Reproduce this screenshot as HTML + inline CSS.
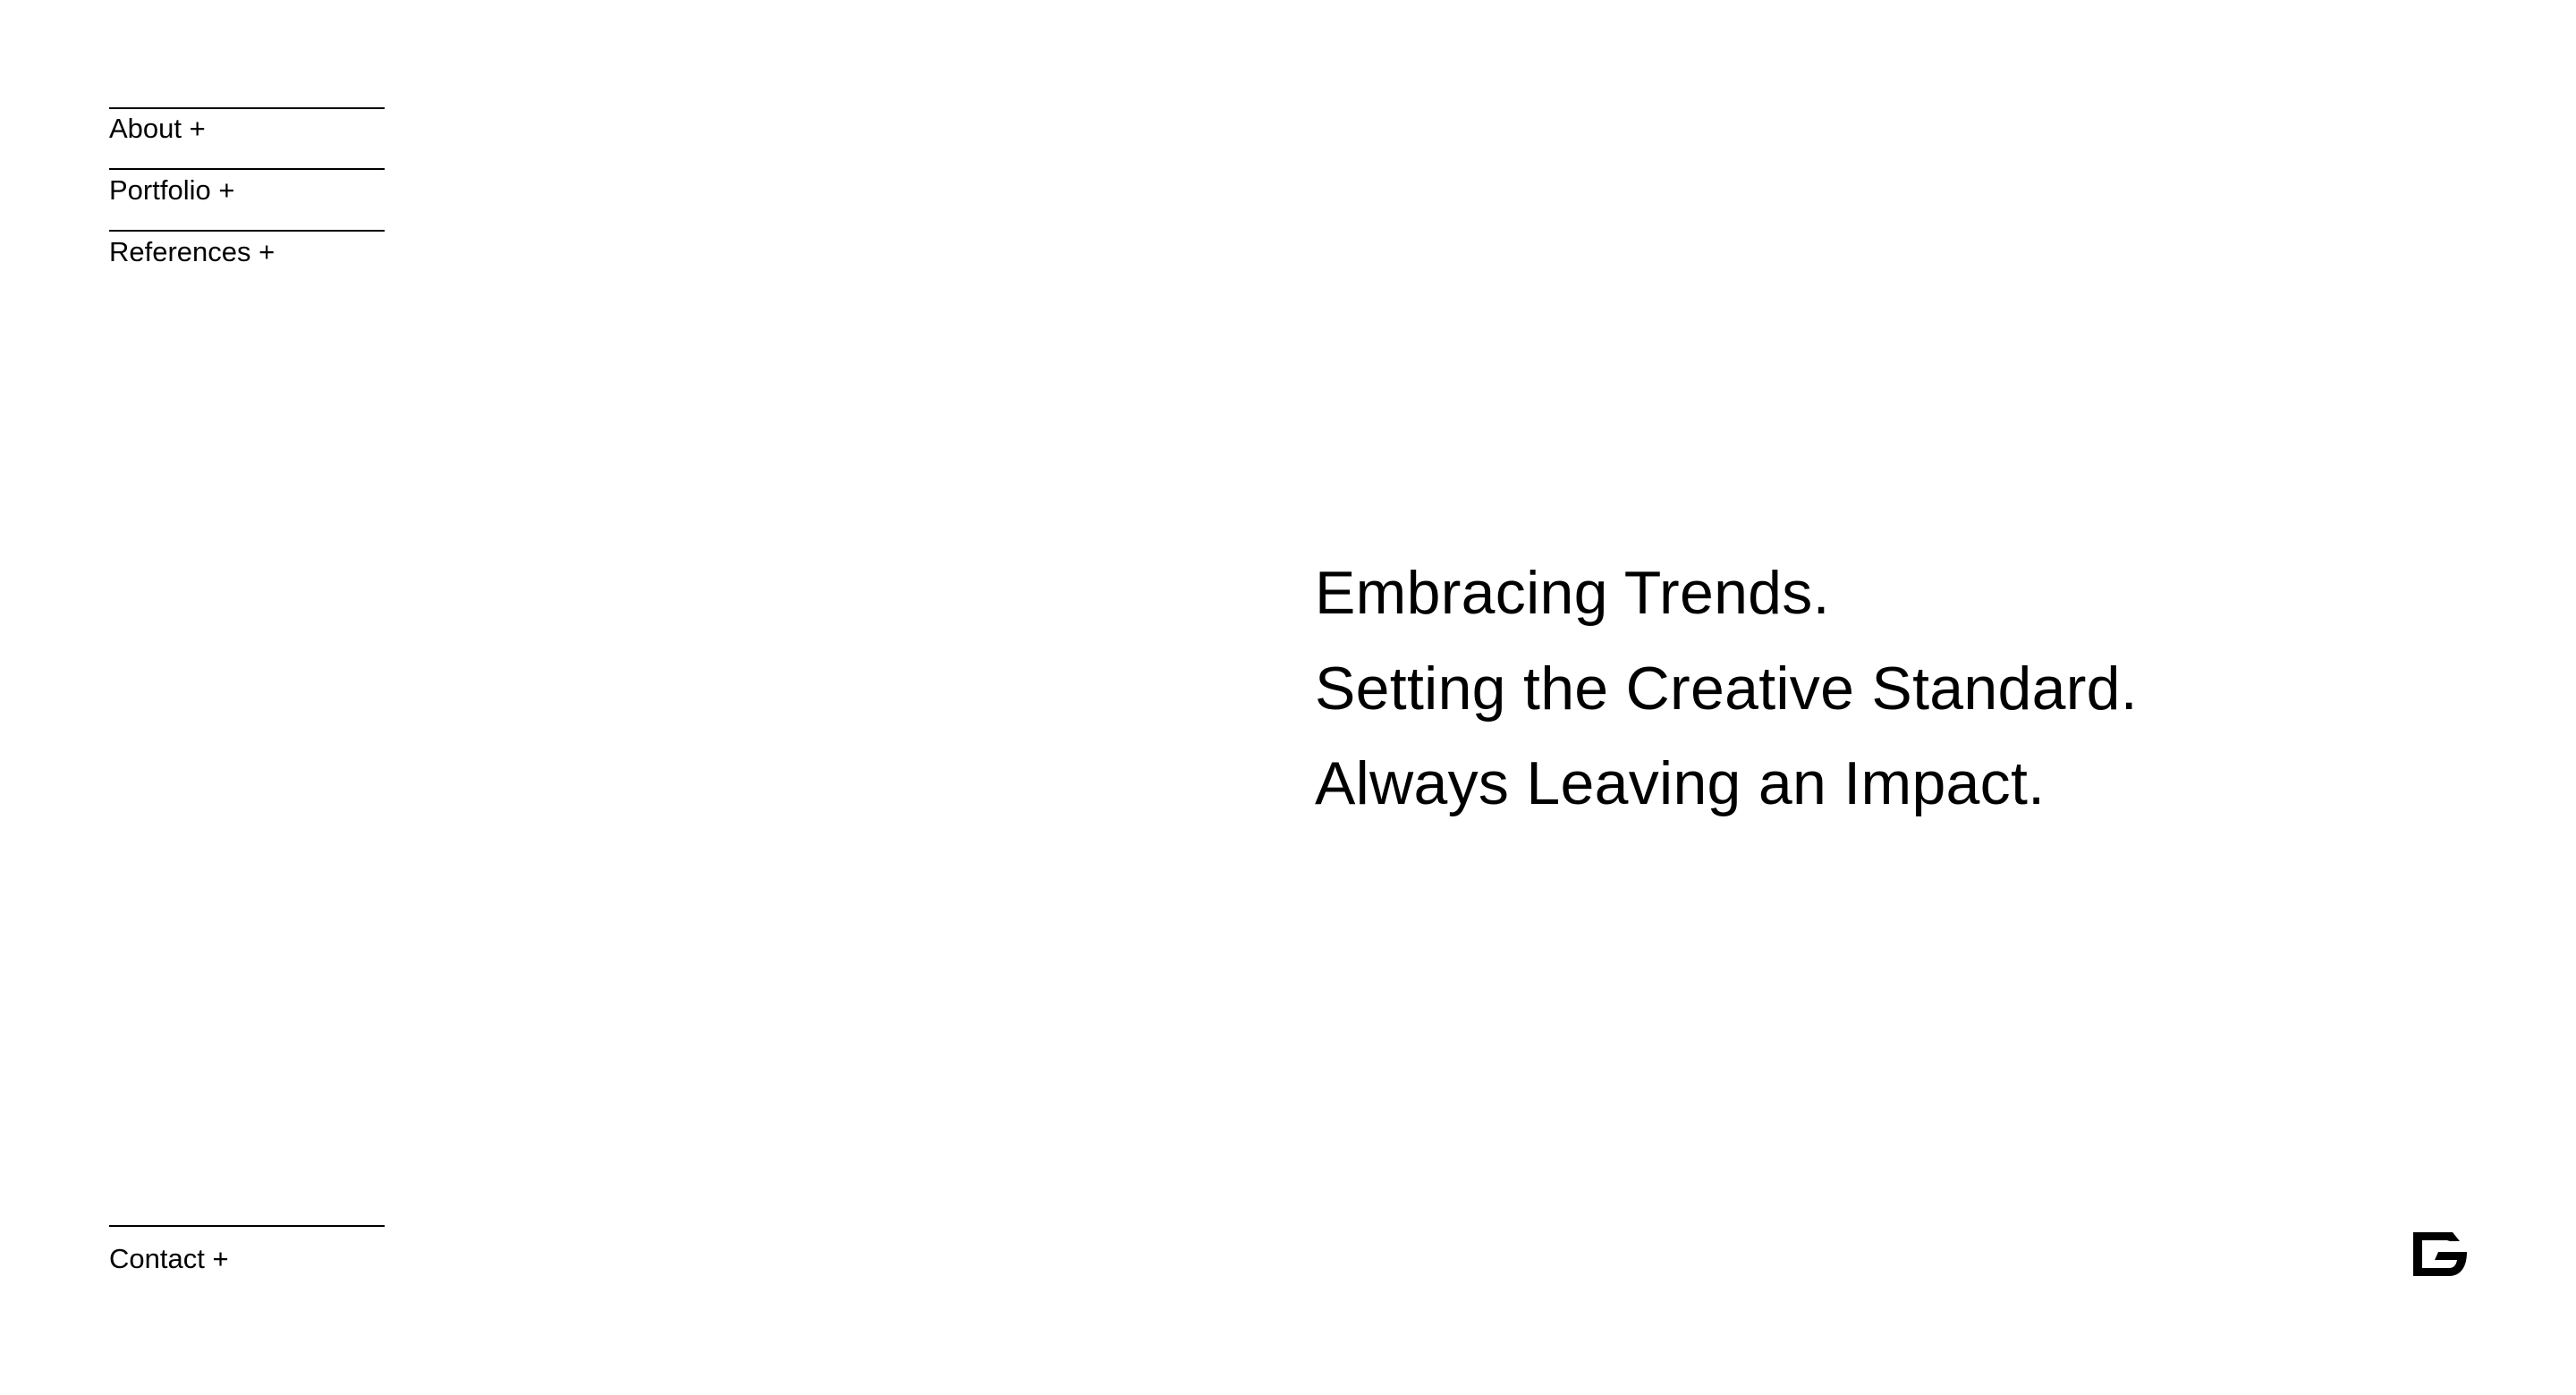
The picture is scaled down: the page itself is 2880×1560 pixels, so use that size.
<!DOCTYPE html>
<html><head><meta charset="utf-8"><style>
html,body{margin:0;padding:0;background:#fff;}
body{width:2880px;height:1560px;position:relative;overflow:hidden;font-family:"Liberation Sans",sans-serif;color:#000;}
.line{position:absolute;left:122px;width:308px;height:2px;background:#000;}
.nav{position:absolute;left:122px;font-size:31px;line-height:1;}
.hero{position:absolute;left:1470px;font-size:68px;line-height:1;letter-spacing:0.3px;white-space:nowrap;}
</style></head><body>
<div class="line" style="top:120px"></div>
<div class="nav" style="top:128px">About +</div>
<div class="line" style="top:188px"></div>
<div class="nav" style="top:197px">Portfolio +</div>
<div class="line" style="top:257px"></div>
<div class="nav" style="top:266px">References +</div>

<div class="hero" style="top:629px">Embracing Trends.</div>
<div class="hero" style="top:736px">Setting the Creative Standard.</div>
<div class="hero" style="top:842px">Always Leaving an Impact.</div>

<div class="line" style="top:1370px"></div>
<div class="nav" style="top:1392px">Contact +</div>

<svg style="position:absolute;left:2698px;top:1378px" width="62" height="50" viewBox="0 0 62 50">
<path d="M0 0 H44 L52 10 H41 L38 9 H10 V40 H40 C45 40 48 37 49 31 H24 L28 22 H60 C60 40 52 49 40 49 H0 Z" fill="#000"/>
</svg>
</body></html>
